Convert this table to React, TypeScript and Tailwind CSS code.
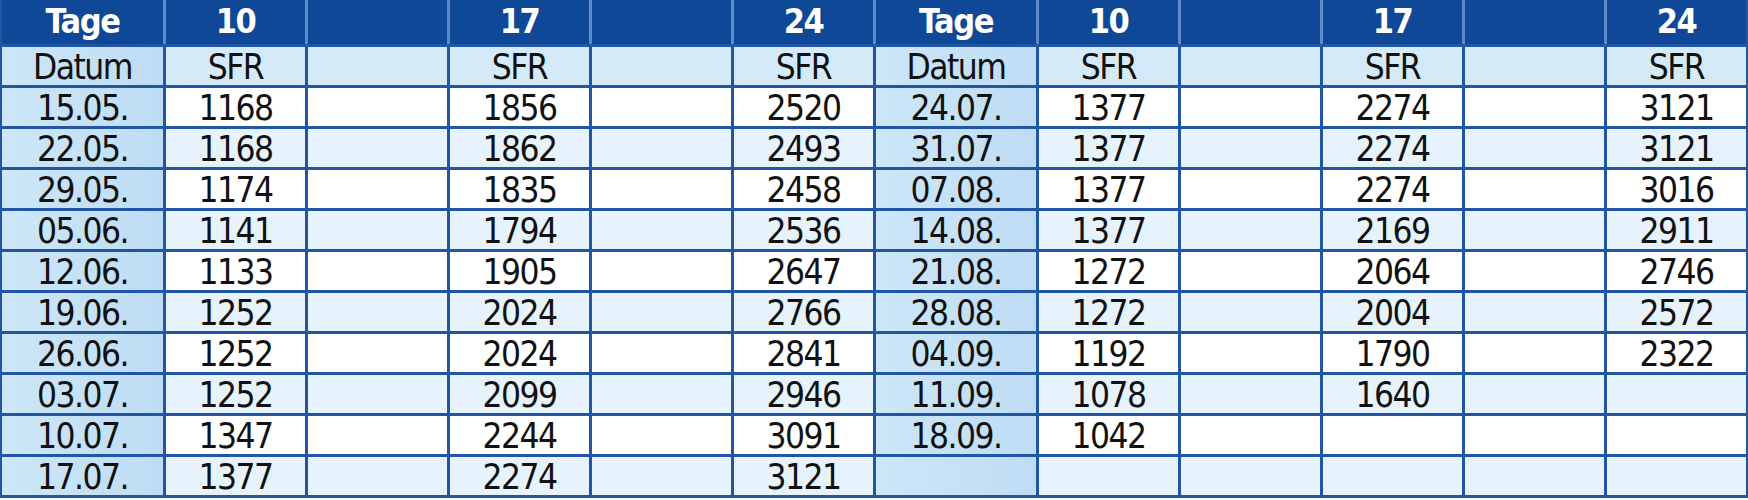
import React from 'react';

const grid = 'grid grid-cols-[161px_repeat(5,139px)_160px_repeat(4,139px)_1fr] gap-x-[3px]';

type Row = [string, string, string, string];

const left: Row[] = [
  ['15.05.', '1168', '1856', '2520'],
  ['22.05.', '1168', '1862', '2493'],
  ['29.05.', '1174', '1835', '2458'],
  ['05.06.', '1141', '1794', '2536'],
  ['12.06.', '1133', '1905', '2647'],
  ['19.06.', '1252', '2024', '2766'],
  ['26.06.', '1252', '2024', '2841'],
  ['03.07.', '1252', '2099', '2946'],
  ['10.07.', '1347', '2244', '3091'],
  ['17.07.', '1377', '2274', '3121'],
];

const right: Row[] = [
  ['24.07.', '1377', '2274', '3121'],
  ['31.07.', '1377', '2274', '3121'],
  ['07.08.', '1377', '2274', '3016'],
  ['14.08.', '1377', '2169', '2911'],
  ['21.08.', '1272', '2064', '2746'],
  ['28.08.', '1272', '2004', '2572'],
  ['04.09.', '1192', '1790', '2322'],
  ['11.09.', '1078', '1640', ''],
  ['18.09.', '1042', '', ''],
  ['', '', '', ''],
];

const HeadCell = ({ children }: { children?: React.ReactNode }) => (
  <div className="flex items-start justify-center bg-[#0e4897] pt-[1px] text-[34px] leading-[40px] font-semibold tracking-[-1.5px] text-white">
    {children}
  </div>
);

const DateCell = ({ children }: { children?: React.ReactNode }) => (
  <div className="flex items-center justify-center bg-gradient-to-r from-[#cde7f8] to-[#bedcf4] pt-[2px] text-[35px] leading-none tracking-[-1.5px] text-[#111]">
    {children}
  </div>
);

const ValueCell = ({ children, shaded }: { children?: React.ReactNode; shaded: boolean }) => (
  <div
    className={`flex items-center justify-center pt-[2px] text-[35px] leading-none tracking-[-1.5px] text-[#111] ${
      shaded ? 'bg-[#e6f2fc]' : 'bg-white'
    }`}
  >
    {children}
  </div>
);

const SubCell = ({ children }: { children?: React.ReactNode }) => (
  <div className="flex items-center justify-center bg-[#d5eaf9] pt-[2px] text-[35px] leading-none tracking-[-1.5px] text-[#111]">
    {children}
  </div>
);

export default function App() {
  return (
    <div className="w-[1748px] h-[500px] bg-white">
      <div className="flex flex-col gap-y-[3px] bg-[#2156a5] px-[2px] pb-[3px] font-['DejaVu_Sans_Condensed','DejaVu_Sans',sans-serif]">
        {/* Header */}
        <div className={`${grid} h-[44px] bg-[#5f8ac8]`}>
          {[0, 1].map((half) => (
            <React.Fragment key={half}>
              <HeadCell>Tage</HeadCell>
              <HeadCell>10</HeadCell>
              <HeadCell />
              <HeadCell>17</HeadCell>
              <HeadCell />
              <HeadCell>24</HeadCell>
            </React.Fragment>
          ))}
        </div>

        {/* Sub header */}
        <div className={`${grid} h-[38px]`}>
          {[0, 1].map((half) => (
            <React.Fragment key={half}>
              <DateCell>Datum</DateCell>
              <SubCell>SFR</SubCell>
              <SubCell />
              <SubCell>SFR</SubCell>
              <SubCell />
              <SubCell>SFR</SubCell>
            </React.Fragment>
          ))}
        </div>

        {/* Data rows */}
        {left.map((l, i) => {
          const r = right[i];
          const shaded = i % 2 === 1;
          return (
            <div key={i} className={`${grid} h-[38px]`}>
              {[l, r].map((row, h) => (
                <React.Fragment key={h}>
                  <DateCell>{row[0]}</DateCell>
                  <ValueCell shaded={shaded}>{row[1]}</ValueCell>
                  <ValueCell shaded={shaded} />
                  <ValueCell shaded={shaded}>{row[2]}</ValueCell>
                  <ValueCell shaded={shaded} />
                  <ValueCell shaded={shaded}>{row[3]}</ValueCell>
                </React.Fragment>
              ))}
            </div>
          );
        })}
      </div>
    </div>
  );
}
